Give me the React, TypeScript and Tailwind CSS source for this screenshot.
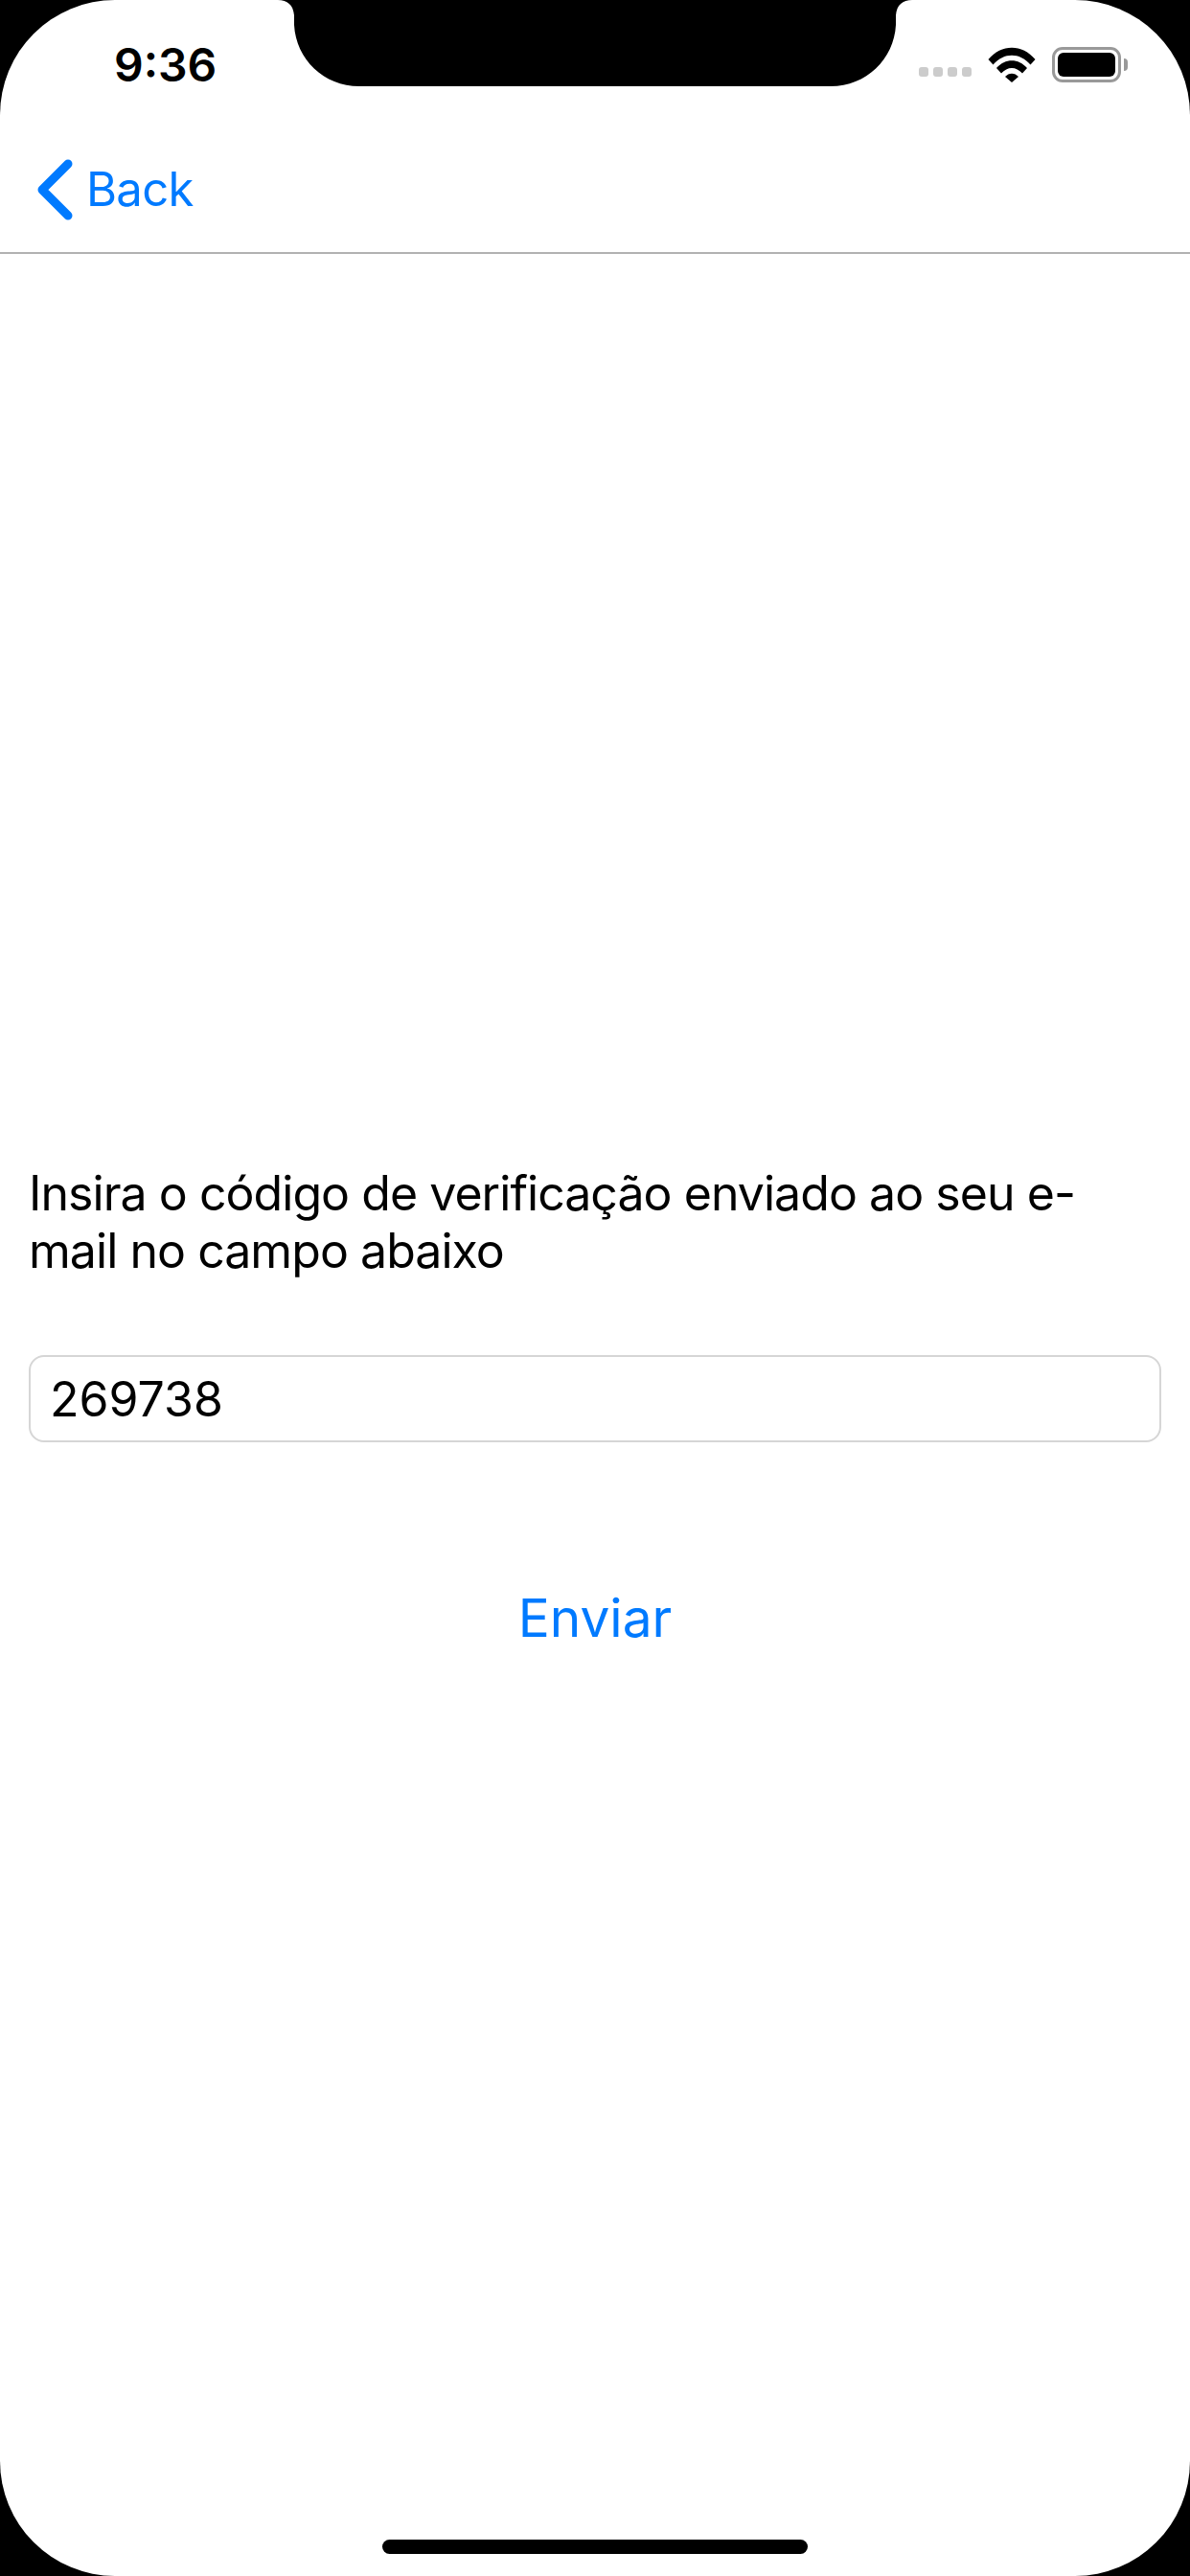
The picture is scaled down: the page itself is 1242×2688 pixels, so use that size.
const SF = "font-['Inter','Liberation_Sans',sans-serif]";

function Notch() {
	return (
		<svg
			className="absolute left-[290px] top-0"
			width="662"
			height="90"
			viewBox="0 0 662 90"
		>
			<path
				d="M0 0 C10 0 16 5 17 16 V26 C19 62 48 90 85 90 H577 C614 90 643 62 645 26 V16 C646 5 652 0 662 0 Z"
				fill="#000"
			/>
		</svg>
	);
}

function WifiIcon() {
	return (
		<svg width="50" height="37" viewBox="0 0 50 37">
			<path
				d="M0.5 13 C14 -3.5 36 -3.5 49.5 13 L44.5 18.5 C33 5.5 17 5.5 5.500 18.5 Z"
				fill="#000"
			/>
			<path
				d="M9 22 C18 11.500 32 11.500 41 22 L36 27.500 C29.500 20 20.500 20 14 27.500 Z"
				fill="#000"
			/>
			<path
				d="M18 31 C22 26.500 28 26.500 32 31 L25 37 Z"
				fill="#000"
			/>
		</svg>
	);
}

function BatteryIcon() {
	return (
		<div className="flex items-center gap-[3px]">
			<div className="h-[37px] w-[72px] rounded-[11px] border-[3px] border-[#999999] bg-white p-[3px]">
				<div className="h-full w-full rounded-[6px] bg-black" />
			</div>
			<div className="h-[13px] w-[4px] rounded-r-[4px] bg-[#999999]" />
		</div>
	);
}

function StatusBar() {
	return (
		<div className="flex h-[100px] shrink-0 items-start justify-between pl-[119px] pr-[65px] pt-[39px]">
			<span
				className={`${SF} text-[48px] font-semibold leading-[58px] text-black`}
			>
				9:36
			</span>
			<div className="flex items-center pt-[10px]">
				<div className="mt-[15px] flex gap-[5px]">
					<span className="h-[10px] w-[10px] rounded-[3px] bg-[#cccccc]" />
					<span className="h-[10px] w-[10px] rounded-[3px] bg-[#cccccc]" />
					<span className="h-[10px] w-[10px] rounded-[3px] bg-[#cccccc]" />
					<span className="h-[10px] w-[10px] rounded-[3px] bg-[#cccccc]" />
				</div>
				<div className="ml-[17px] mr-[17px] flex">
					<WifiIcon />
				</div>
				<BatteryIcon />
			</div>
		</div>
	);
}

function NavBar() {
	return (
		<div className="flex h-[165px] shrink-0 items-start border-b-2 border-[#b2b2b2] pl-[39px] pt-[66px]">
			<svg width="38" height="64" viewBox="0 0 38 64">
				<path
					d="M32 5 L5 32 L32 59"
					fill="none"
					stroke="#007aff"
					strokeWidth="9"
					strokeLinecap="round"
					strokeLinejoin="round"
				/>
			</svg>
			<span
				className={`${SF} ml-[13px] mt-[2px] text-[49px] leading-[60px] tracking-[-0.7px] text-[#007aff]`}
			>
				Back
			</span>
		</div>
	);
}

export default function App() {
	return (
		<div className="h-[2688px] w-[1242px] bg-black">
			<div className="relative flex h-full w-full flex-col overflow-hidden rounded-[120px] bg-white">
				<Notch />
				<StatusBar />
				<NavBar />

				{/* Form */}
				<div className={`${SF} flex flex-col px-[30px] pt-[950px]`}>
					<p className="text-[50px] leading-[60px] tracking-[-0.95px] text-black">
						Insira o código de verificação enviado ao seu e-mail no campo abaixo
					</p>
					<input
						readOnly
						value="269738"
						className="mt-[79px] h-[91px] w-full rounded-[16px] border-2 border-[#d6d6d6] px-[20px] text-[50px] text-black outline-none"
					/>
					<button className="mt-[147px] text-[55px] leading-[72px] text-[#007aff]">
						Enviar
					</button>
				</div>

				{/* Home indicator */}
				<div className="mt-auto mb-[23px] h-[15px] w-[444px] self-center rounded-full bg-black" />
			</div>
		</div>
	);
}
